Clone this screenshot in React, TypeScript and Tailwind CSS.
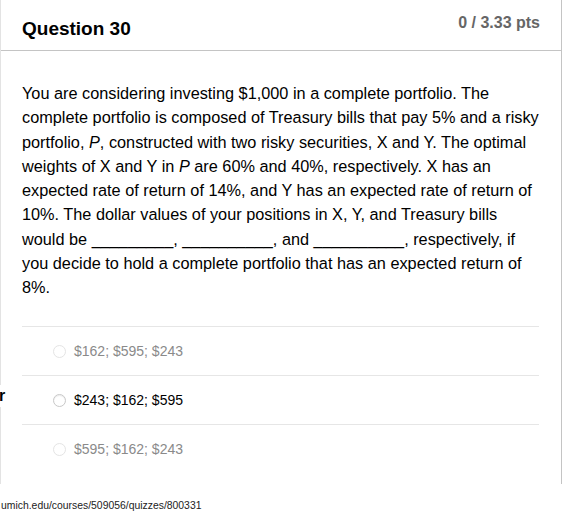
import React from "react"

const options = [
  { label: "$162; $595; $243", faded: true },
  { label: "$243; $162; $595", faded: false },
  { label: "$595; $162; $243", faded: true },
]

const Blank = ({ n }: { n: number }) => <span>{"_".repeat(n)}</span>

export default function App() {
  return (
    <div className="relative h-[511px] w-[568px] overflow-hidden bg-white font-['Liberation_Sans',Arial,sans-serif] text-black">
      <div className="h-[484px] w-[562px] border-l border-r border-l-[#e3e3e3] border-r-[#c4c4c4]">
        {/* header */}
        <div className="flex h-[51px] items-start justify-between border-b border-[#c4c4c4] pl-[21px] pr-[21px]">
          <h2 className="mt-[18px] text-[19px] font-bold leading-[22px]">Question 30</h2>
          <span className="mt-[13px] text-[16px] font-bold leading-[20px] text-[#666]">0 / 3.33 pts</span>
        </div>

        {/* question body */}
        <div className="px-[21px] pt-[30px]">
          <p className="whitespace-nowrap text-[16.3px] leading-[24.25px]">
            You are considering investing $1,000 in a complete portfolio. The
            <br />
            complete portfolio is composed of Treasury bills that pay 5% and a risky
            <br />
            portfolio, <i>P</i>, constructed with two risky securities, X and Y. The optimal
            <br />
            weights of X and Y in <i>P</i> are 60% and 40%, respectively. X has an
            <br />
            expected rate of return of 14%, and Y has an expected rate of return of
            <br />
            10%. The dollar values of your positions in X, Y, and Treasury bills
            <br />
            would be <Blank n={9} />, <Blank n={10} />, and <Blank n={10} />, respectively, if
            <br />
            you decide to hold a complete portfolio that has an expected return of
            <br />
            8%.
          </p>

          <div className="mt-[27px] pr-[1px]">
            {options.map((o) => (
              <div key={o.label} className="flex h-[49px] items-center border-t border-[#e6e6e6] pl-[31px]">
                <span
                  className={`h-[13px] w-[13px] rounded-full border bg-white ${
                    o.faded ? "border-[#e4e4e4]" : "border-[#c8c8c8] shadow-[inset_0_1px_1px_rgba(0,0,0,0.08)]"
                  }`}
                />
                <span className={`ml-[8px] text-[14px] ${o.faded ? "text-[#8a8a8a]" : "text-black"}`}>
                  {o.label}
                </span>
              </div>
            ))}
          </div>
        </div>
      </div>

      {/* overlapping fragment at left edge */}
      <span className="absolute left-[-1px] top-[385px] bg-white pr-[1px] text-[16px] font-bold leading-[22px]">
        r
      </span>

      {/* footer url */}
      <div className="absolute left-[1px] top-[499px] text-[10.4px] leading-[14px] text-[#222]">
        umich.edu/courses/509056/quizzes/800331
      </div>
    </div>
  )
}
